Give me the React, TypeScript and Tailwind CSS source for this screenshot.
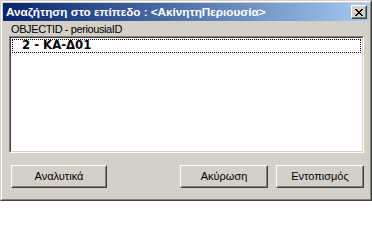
import React from 'react';

const ui = { fontFamily: 'Tahoma, "Liberation Sans", "DejaVu Sans", sans-serif' };

function Btn({ label, w }: { label: string; w: string }) {
  return (
    <div className={`${w} h-[23px] border border-t-white border-l-white border-r-[#404040] border-b-[#404040]`}>
      <div className="h-full border border-t-[#d4d0c8] border-l-[#d4d0c8] border-r-[#808080] border-b-[#808080] flex items-center justify-center text-[11px] text-black">
        {label}
      </div>
    </div>
  );
}

export default function App() {
  return (
    <div className="w-[372px] h-[201px] bg-[#d4d0c8] border border-t-[#d4d0c8] border-l-[#d4d0c8] border-r-[#404040] border-b-[#404040]" style={ui}>
      <div className="h-full border border-t-white border-l-white border-r-[#808080] border-b-[#808080] p-px flex flex-col">
        {/* title bar */}
        <div className="h-[18px] flex items-center justify-between pl-[3px] pr-[2px] bg-gradient-to-r from-[#0a246a] to-[#a6caf0]">
          <span className="text-[11.7px] font-bold text-white whitespace-nowrap leading-none">
            Αναζήτηση στο επίπεδο : &lt;ΑκίνητηΠεριουσία&gt;
          </span>
          <div className="w-[16px] h-[14px] border border-t-white border-l-white border-r-[#404040] border-b-[#404040]">
            <div className="h-full border border-t-[#d4d0c8] border-l-[#d4d0c8] border-r-[#808080] border-b-[#808080] bg-[#d4d0c8] flex items-center justify-center">
              <svg width="8" height="7" viewBox="0 0 8 7" shapeRendering="crispEdges">
                <path d="M0 0h2v1h-2zM6 0h2v1h-2zM1 1h2v1h-2zM5 1h2v1h-2zM2 2h4v1h-4zM3 3h2v1h-2zM2 4h4v1h-4zM1 5h2v1h-2zM5 5h2v1h-2zM0 6h2v1h-2zM6 6h2v1h-2z" fill="#000" />
              </svg>
            </div>
          </div>
        </div>

        {/* body */}
        <div className="flex-1 flex flex-col px-[6px] pr-[5px]">
          <div className="h-[15px] pt-[2px] pl-[2px] text-[11px] tracking-[-0.4px] text-black leading-[13px]">OBJECTID - periousiaID</div>
          <div className="h-[117px] border border-t-[#808080] border-l-[#808080] border-r-white border-b-white">
            <div className="h-full border border-t-[#404040] border-l-[#404040] border-r-[#d4d0c8] border-b-[#d4d0c8] bg-white pt-px px-px">
              <div
                className="h-[14px] border border-dotted border-black flex items-center pl-[9px] text-[11.7px] font-bold text-black"
                style={{ fontFamily: '"DejaVu Sans", sans-serif' }}
              >
                2 - ΚΑ-Δ01
              </div>
            </div>
          </div>
          <div className="flex items-start mt-[12px] pl-[2px]">
            <Btn label="Αναλυτικά" w="w-[96px]" />
            <div className="flex-1" />
            <Btn label="Ακύρωση" w="w-[88px]" />
            <div className="w-[8px]" />
            <Btn label="Εντοπισμός" w="w-[88px]" />
          </div>
        </div>
      </div>
    </div>
  );
}
